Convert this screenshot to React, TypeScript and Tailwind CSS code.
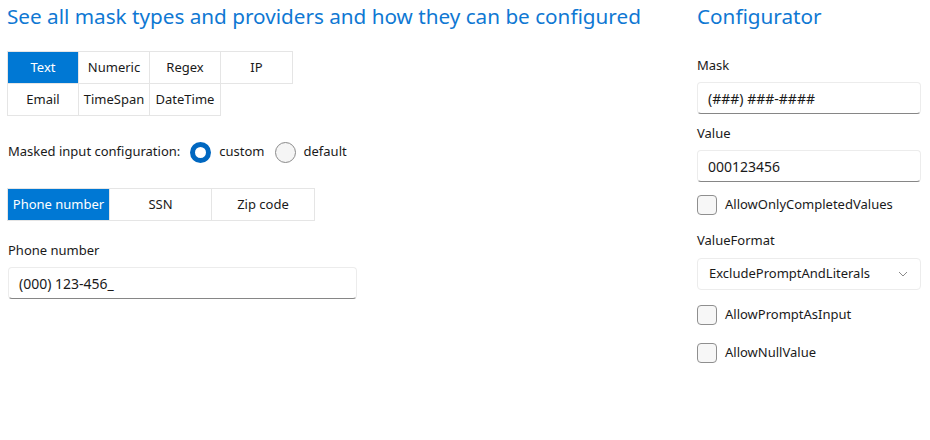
import React from "react";

const font = { fontFamily: '"Noto Sans", "Open Sans", sans-serif' };

function Cell({ label, selected }: { label: string; selected?: boolean }) {
  return (
    <div
      className={`h-[32px] flex items-center justify-center text-[13px] border-r border-b border-[#e5e5e5] ${
        selected ? "bg-[#0078d4] text-white border-[#0078d4]" : "bg-white text-[#1a1a1a]"
      }`}
    >
      {label}
    </div>
  );
}

function TextInput({ value, w }: { value: string; w: string }) {
  return (
    <div
      className={`${w} h-[32px] flex items-center px-[10px] rounded-[4px] border border-[#ececec] border-b-[#868686] bg-white text-[14px] text-[#1a1a1a]`}
    >
      {value}
    </div>
  );
}

function Check({ label }: { label: string }) {
  return (
    <div className="flex items-center gap-[8px] h-[20px]">
      <div className="w-[20px] h-[20px] rounded-[4px] border border-[#8f8f8f] bg-[#f7f7f7]" />
      <span className="text-[13px] text-[#1a1a1a]">{label}</span>
    </div>
  );
}

export default function App() {
  return (
    <div className="w-[930px] h-[440px] bg-white flex" style={font}>
      <div className="w-[697px] pl-[7px] pt-[2px]">
        <div className="text-[20.7px] leading-[28px] text-[#0f78d3]">
          See all mask types and providers and how they can be configured
        </div>
        <div className="mt-[21px] w-fit grid grid-cols-[71px_71px_71px_72px] border-l border-t border-[#e5e5e5]">
          <Cell label="Text" selected />
          <Cell label="Numeric" />
          <Cell label="Regex" />
          <Cell label="IP" />
          <Cell label="Email" />
          <Cell label="TimeSpan" />
          <Cell label="DateTime" />
        </div>
        <div className="mt-[25px] flex items-center h-[22px] text-[13px] text-[#1a1a1a]">
          <span className="pl-[1px]">Masked input configuration:</span>
          <div className="ml-[10px] w-[21px] h-[21px] rounded-full border-[5px] border-[#0067c0] bg-white" />
          <span className="ml-[8px]">custom</span>
          <div className="ml-[10px] w-[21px] h-[21px] rounded-full border border-[#8a8a8a] bg-[#f5f5f5]" />
          <span className="ml-[8px]">default</span>
        </div>
        <div className="mt-[25px] w-fit grid grid-cols-[102px_102px_103px] border-l border-t border-[#e5e5e5]">
          <Cell label="Phone number" selected />
          <Cell label="SSN" />
          <Cell label="Zip code" />
        </div>
        <div className="mt-[20px] text-[13px] text-[#1a1a1a] pl-[1px] leading-[18px]">Phone number</div>
        <div className="mt-[8px] pl-[1px]">
          <TextInput value="(000) 123-456_" w="w-[349px]" />
        </div>
      </div>
      <div className="w-[224px] pt-[2px]">
        <div className="text-[20.7px] leading-[28px] text-[#0f78d3]">Configurator</div>
        <div className="mt-[26px] text-[13px] leading-[18px] text-[#1a1a1a]">Mask</div>
        <div className="mt-[8px]">
          <TextInput value="(###) ###-####" w="w-[224px]" />
        </div>
        <div className="mt-[10px] text-[13px] leading-[18px] text-[#1a1a1a]">Value</div>
        <div className="mt-[8px]">
          <TextInput value="000123456" w="w-[224px]" />
        </div>
        <div className="mt-[13px]">
          <Check label="AllowOnlyCompletedValues" />
        </div>
        <div className="mt-[16px] text-[13px] leading-[18px] text-[#1a1a1a]">ValueFormat</div>
        <div className="mt-[9px] w-[224px] h-[32px] flex items-center justify-between pl-[11px] pr-[12px] rounded-[4px] border border-[#ececec] bg-white text-[13px] text-[#1a1a1a]">
          <span>ExcludePromptAndLiterals</span>
          <svg width="10" height="6" viewBox="0 0 10 6">
            <path d="M1 1 L5 5 L9 1" fill="none" stroke="#8a8a8a" strokeWidth="1" />
          </svg>
        </div>
        <div className="mt-[15px]">
          <Check label="AllowPromptAsInput" />
        </div>
        <div className="mt-[18px]">
          <Check label="AllowNullValue" />
        </div>
      </div>
    </div>
  );
}
